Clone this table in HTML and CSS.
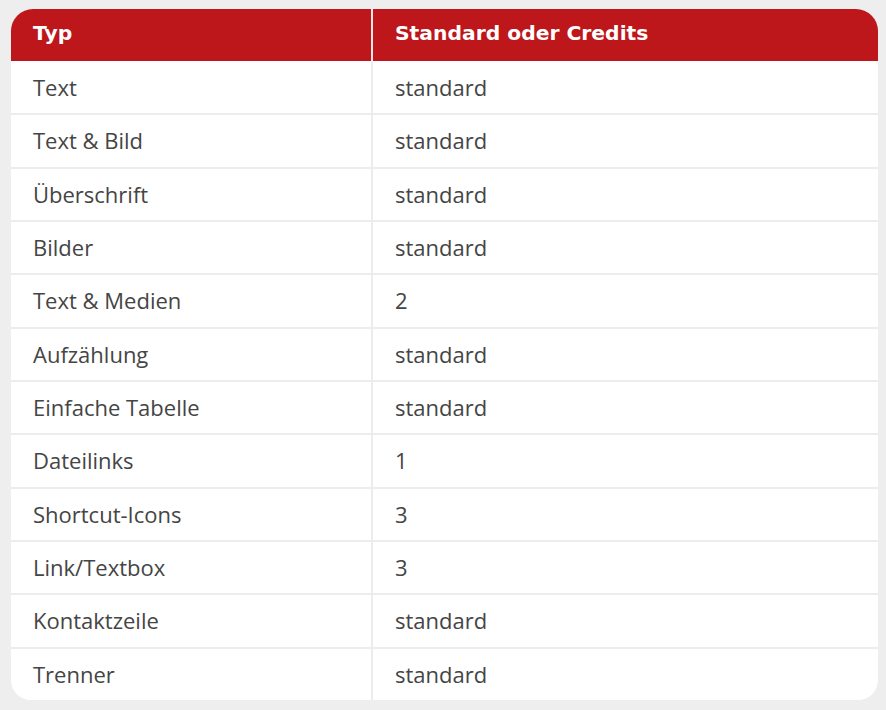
FILE: index.html
```html
<!DOCTYPE html>
<html lang="de">
<head>
<meta charset="utf-8">
<title>Typ – Standard oder Credits</title>
<link rel="stylesheet" href="styles.css">
</head>
<body>
<div class="card">
<table class="types">
<thead>
<tr><th>Typ</th><th>Standard oder Credits</th></tr>
</thead>
<tbody>
<tr><td>Text</td><td>standard</td></tr>
<tr><td>Text &amp; Bild</td><td>standard</td></tr>
<tr><td>Überschrift</td><td>standard</td></tr>
<tr><td>Bilder</td><td>standard</td></tr>
<tr><td>Text &amp; Medien</td><td>2</td></tr>
<tr><td>Aufzählung</td><td>standard</td></tr>
<tr><td>Einfache Tabelle</td><td>standard</td></tr>
<tr><td>Dateilinks</td><td>1</td></tr>
<tr><td>Shortcut-Icons</td><td>3</td></tr>
<tr><td>Link/Textbox</td><td>3</td></tr>
<tr><td>Kontaktzeile</td><td>standard</td></tr>
<tr><td>Trenner</td><td>standard</td></tr>
</tbody>
</table>
</div>
</body>
</html>
```
FILE: styles.css
```css
html, body {
  margin: 0;
  padding: 0;
  background: #eeeeee;
}
body {
  padding: 9px 8px 9px 11px;
  font-family: "Open Sans", "Liberation Sans", sans-serif;
}
.card {
  width: 867px;
  background: #ffffff;
  border-radius: 22px 22px 20px 20px;
  overflow: hidden;
}
.types {
  width: 100%;
  border-collapse: separate;
  border-spacing: 0;
  table-layout: fixed;
}
.types th, .types td {
  text-align: left;
  padding: 0 0 0 22px;
}
.types th:first-child, .types td:first-child {
  width: 338px;
}
.types th {
  height: 48px;
  padding-bottom: 4px;
  background: #bd171b;
  color: #ffffff;
  font-family: "DejaVu Sans", "Open Sans", sans-serif;
  font-weight: 700;
  font-size: 20.3px;
  letter-spacing: 0;
  border-bottom: 1px solid #ffffff;
}
.types th:first-child {
  border-right: 2px solid #f6e6e6;
}
.types td {
  height: 50.33px;
  padding-bottom: 1px;
  font-size: 22px;
  color: #454545;
  border-bottom: 2px solid #ececec;
}
.types td:first-child {
  border-right: 2px solid #ececec;
}
.types tbody tr:last-child td {
  border-bottom: none;
}
```
